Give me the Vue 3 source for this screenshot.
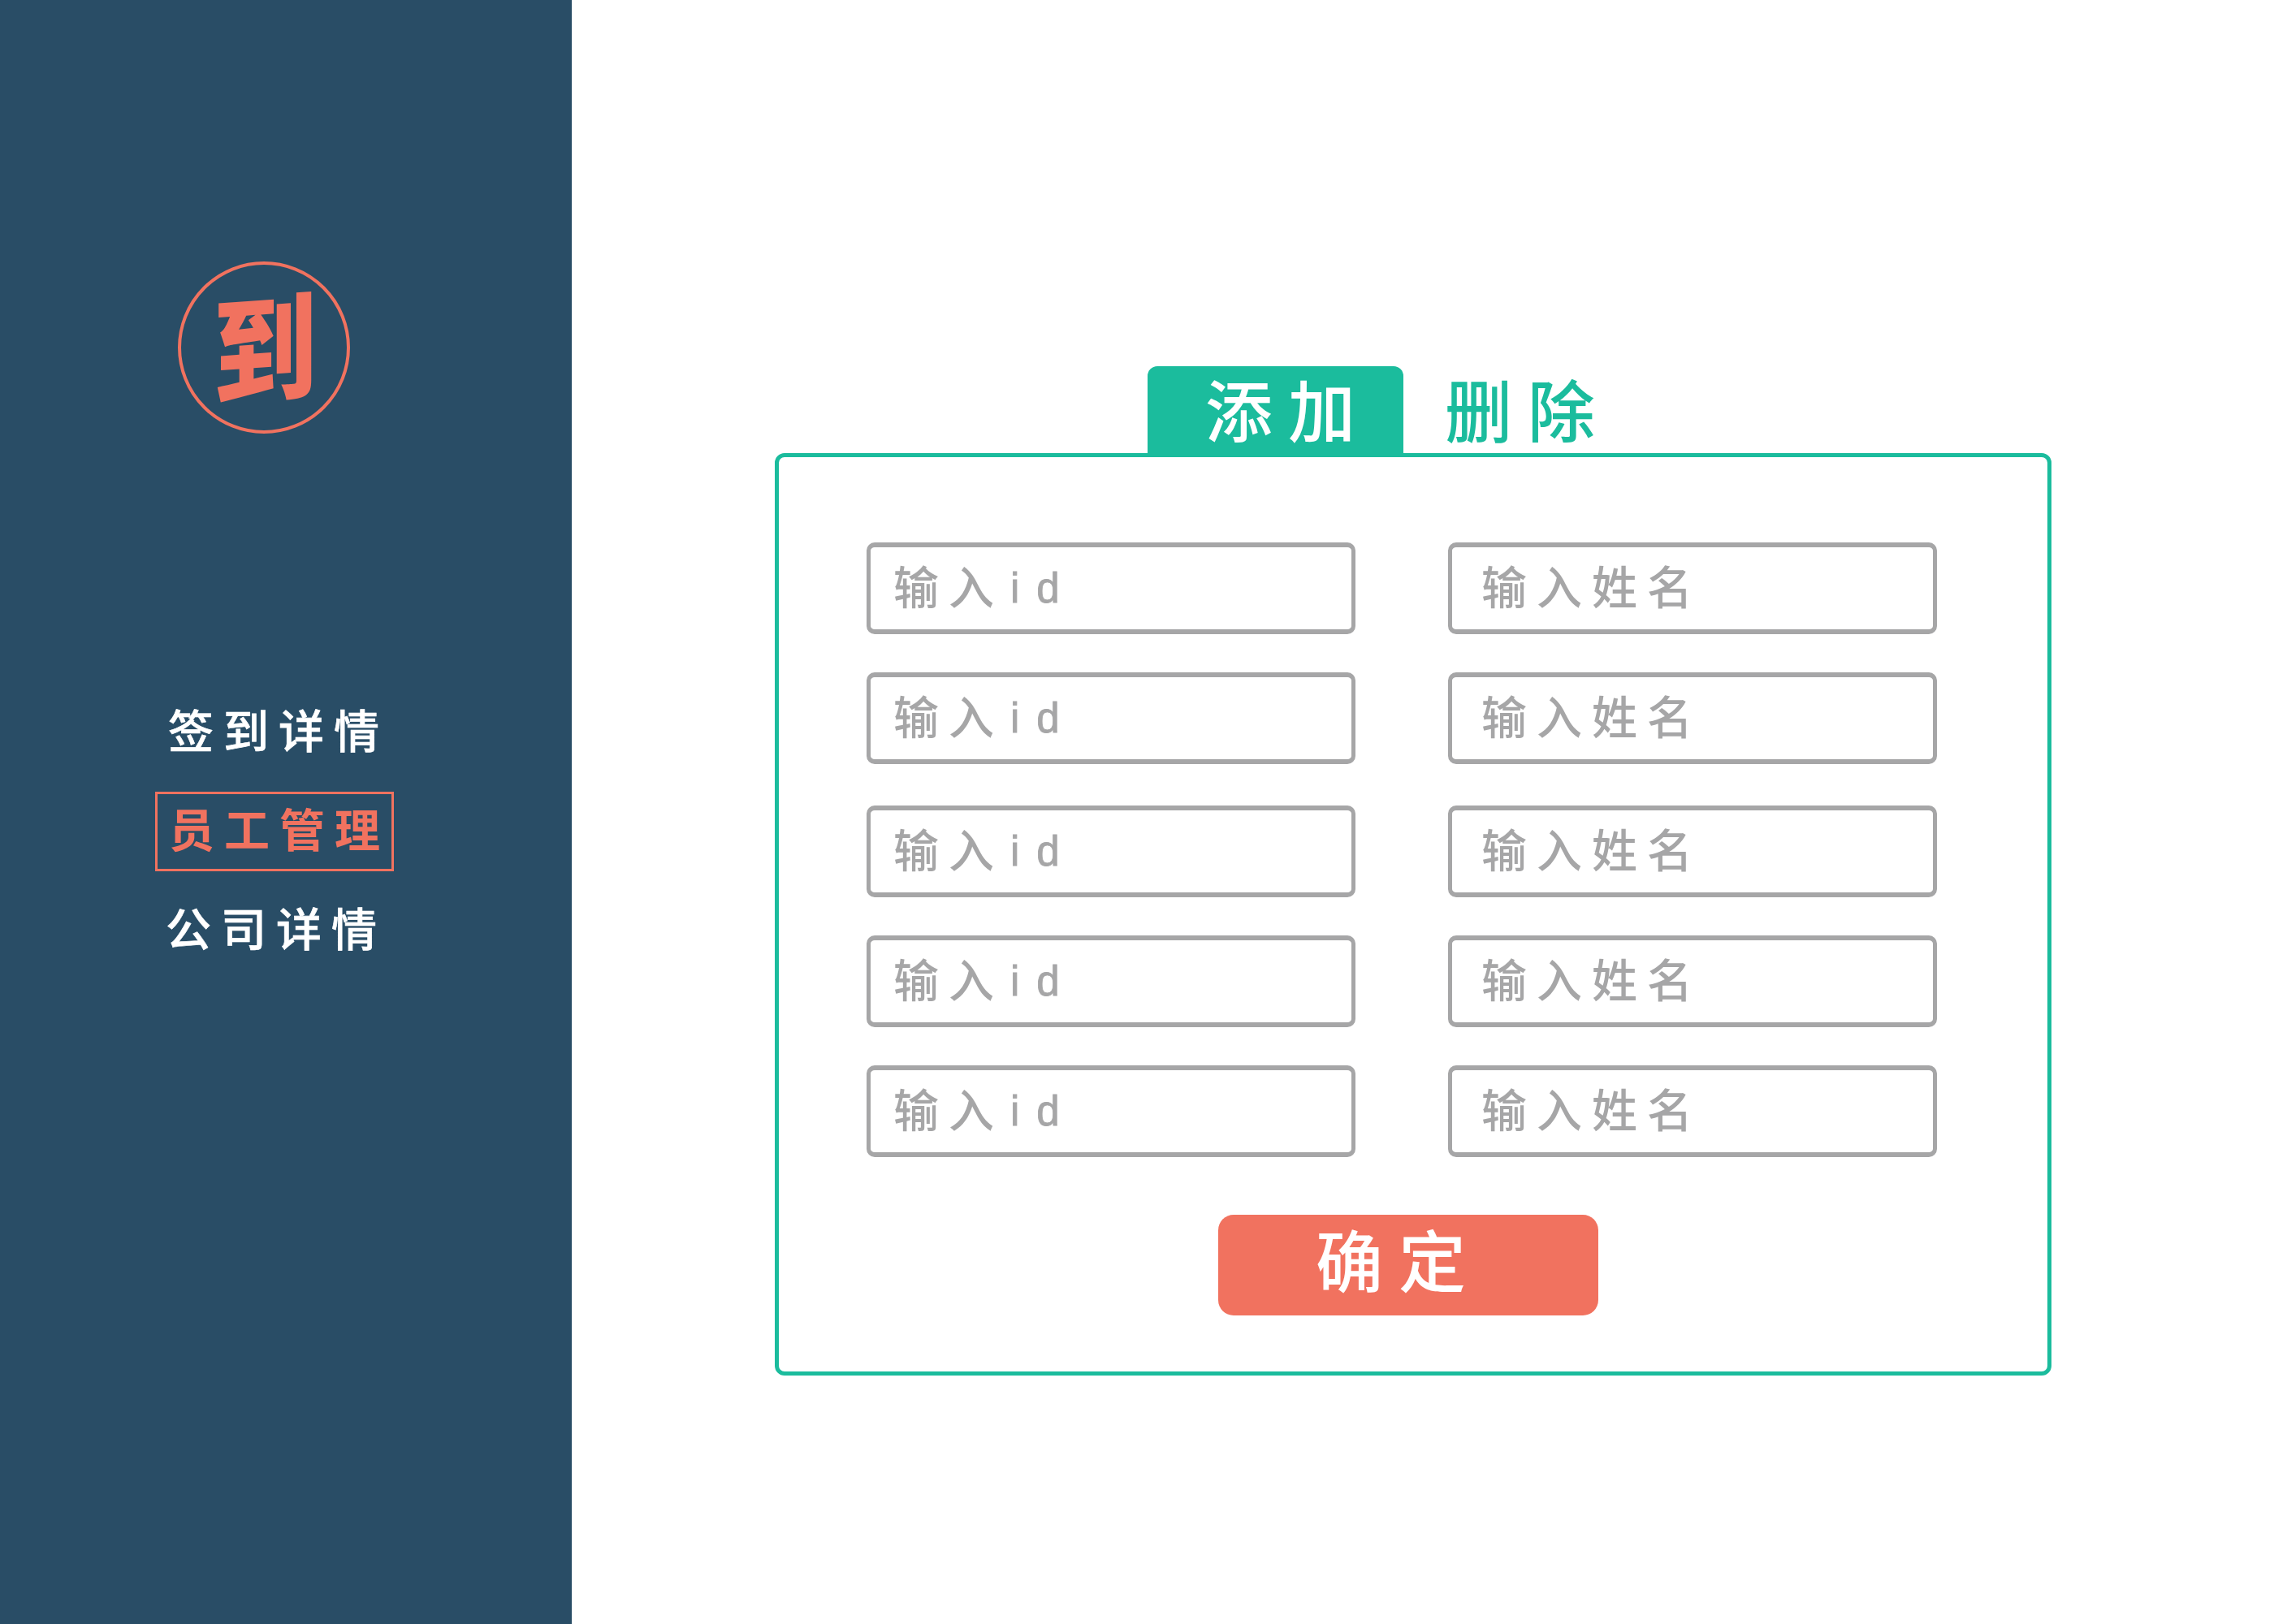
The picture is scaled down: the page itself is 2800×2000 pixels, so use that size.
<script setup>
const rows = [1, 2, 3, 4, 5]
</script>

<template>
  <div class="page">
    <aside class="sidebar">
      <svg class="logo" viewBox="0 0 212 212">
        <circle cx="106" cy="106" r="104" />
        <text transform="translate(43 165) skewY(-4) scale(1.03 1.13)">到</text>
      </svg>
      <nav class="nav">
        <a class="link first">签到详情</a>
        <a class="link active">员工管理</a>
        <a class="link last">公司详情</a>
      </nav>
    </aside>
    <main class="content">
      <div class="tabs">
        <div class="tab selected">添加</div>
        <div class="tab">删除</div>
      </div>
      <form class="panel">
        <div class="fields">
          <div v-for="row in rows" :key="row" class="row">
            <div class="field id">输入<span class="latin">id</span></div>
            <div class="field name">输入姓名</div>
          </div>
        </div>
        <button type="button" class="submit">确定</button>
      </form>
    </main>
  </div>
</template>

<style>
body {
  margin: 0;
  background: #fff;
}
</style>

<style scoped>
.page {
  display: flex;
  width: 2800px;
  height: 2000px;
  overflow: hidden;
  font-family: "Noto Sans CJK SC", sans-serif;
  font-weight: 500;
}
.sidebar {
  flex: none;
  width: 704px;
  height: 2000px;
  box-sizing: border-box;
  padding-top: 322px;
  background: #294d66;
}
.logo {
  display: block;
  width: 212px;
  height: 212px;
  margin-left: 219px;
  overflow: visible;
}
.logo circle {
  fill: none;
  stroke: #f1725f;
  stroke-width: 4;
}
.logo text {
  font-size: 125px;
  font-weight: 900;
  fill: #f1725f;
}
.nav {
  display: flex;
  flex-direction: column;
  margin-top: 315px;
}
.link {
  box-sizing: border-box;
  font-size: 56px;
  letter-spacing: 12px;
  white-space: nowrap;
  color: #fff;
  -webkit-text-stroke: 0.6px currentColor;
}
.first {
  height: 126px;
  padding-left: 207px;
  line-height: 96px;
}
.active {
  width: 294px;
  height: 98px;
  margin-left: 191px;
  padding-left: 14px;
  border: 3px solid #f1725f;
  line-height: 82px;
  font-weight: 700;
  color: #f1725f;
  -webkit-text-stroke: 0;
}
.last {
  padding-left: 204px;
  line-height: 136px;
}
.content {
  width: 1572px;
  padding: 451px 0 0 250px;
}
.tabs {
  display: flex;
  height: 107px;
  margin-left: 459px;
}
.tab {
  box-sizing: border-box;
  height: 107px;
  padding-left: 51px;
  font-size: 83px;
  line-height: 103px;
  letter-spacing: 19px;
  color: #1bbc9d;
}
.selected {
  width: 315px;
  padding-left: 71px;
  border-radius: 12px 12px 0 0;
  background: #1bbc9d;
  color: #fff;
}
.panel {
  box-sizing: border-box;
  width: 1572px;
  height: 1136px;
  padding: 105px 0 0 108px;
  border: 5px solid #1bbc9d;
  border-radius: 12px;
}
.fields {
  display: flex;
  flex-direction: column;
  gap: 47px;
}
.row {
  display: flex;
  gap: 114px;
}
.row:nth-child(3) {
  margin-top: 4px;
}
.field {
  box-sizing: border-box;
  width: 602px;
  height: 113px;
  border: solid #a6a6a7;
  border-width: 6px 5px;
  border-radius: 10px;
  font-size: 56px;
  line-height: 92px;
  letter-spacing: 12px;
  color: #a6a6a7;
}
.id {
  padding-left: 28px;
}
.name {
  padding-left: 36px;
}
.latin {
  position: relative;
  top: -2px;
  margin-left: 8px;
  font-family: "Liberation Sans", sans-serif;
  font-size: 51px;
  line-height: 1;
  letter-spacing: 21px;
  -webkit-text-stroke: 0.8px #a6a6a7;
}
.submit {
  display: block;
  width: 468px;
  height: 124px;
  margin: 71px 0 0 433px;
  padding: 0 0 18px 120px;
  border: 0;
  border-radius: 19px;
  background: #f1725f;
  font: inherit;
  font-size: 83px;
  line-height: 106px;
  letter-spacing: 19px;
  text-align: left;
  color: #fff;
}
</style>
